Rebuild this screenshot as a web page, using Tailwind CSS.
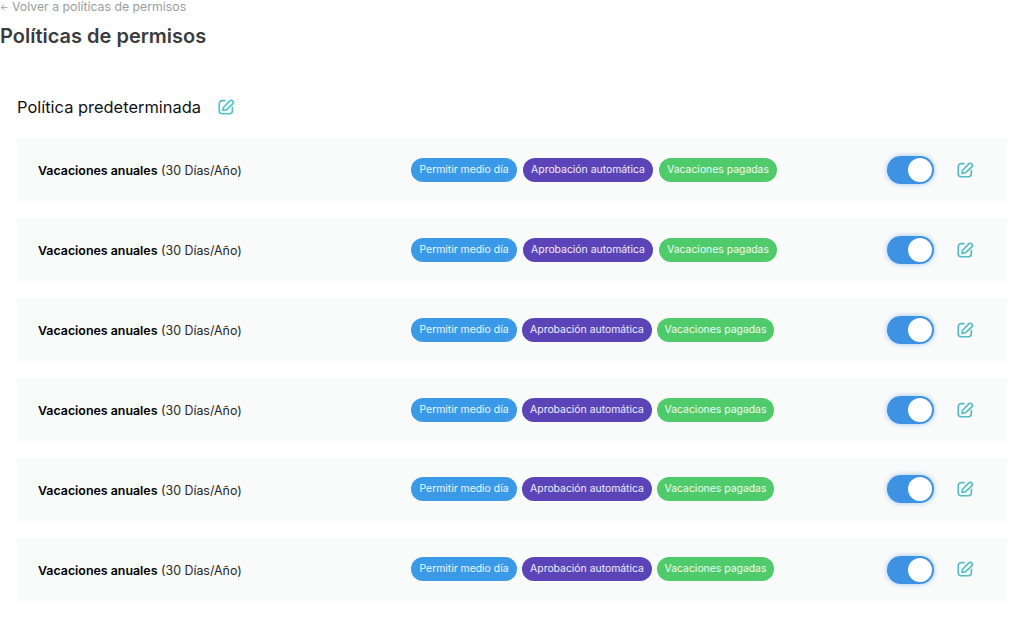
<!DOCTYPE html>
<html lang="es">
<head>
    <meta charset="UTF-8">
    <title>Políticas de permisos</title>
    <script src="https://cdn.jsdelivr.net/npm/@tailwindcss/browser@4"></script>
</head>
<body class="bg-white w-[1024px] h-[618px] overflow-hidden font-['Inter',sans-serif]">
    <!-- Header -->
    <a class="flex items-center gap-[3px] text-[12.300px] leading-[14px] text-[#9a9ea3]"><span class="w-[9px] text-[9px]">←</span>Volver a políticas de permisos</a>
    <h1 class="mt-[7px] text-[20px] leading-[30px] font-semibold text-[#3a3b3d]">Políticas de permisos</h1>

    <div class="pl-[17px] pr-[17px] mt-[44px]">
        <div class="flex items-center h-[24px] mb-[19px]">
            <h2 class="text-[16.450px] leading-[24px] text-[#111214]">Política predeterminada</h2>
            <svg class="ml-[16px] w-[18px] h-[18px] text-[#4cc4d0]" viewBox="0 0 24 24" fill="none" stroke="currentColor" stroke-width="2.200" stroke-linecap="round" stroke-linejoin="round"><path d="M10.500 3.500H7a4 4 0 0 0-4 4V17a4 4 0 0 0 4 4h9.500a4 4 0 0 0 4-4v-4.500"/><path d="M8 16.500l.8-4.200L17.500 3.600a2 2 0 0 1 2.900 0l.9.900a2 2 0 0 1 0 2.900L12.500 15.700z"/></svg>
        </div>

        <div class="flex flex-col gap-[17px]">
            <!-- Row 1 -->
            <div class="flex items-center h-[63px] bg-[#f9fafa] pl-[21px]">
                <p class="w-[373px] pt-[3px] text-[12.400px] text-[#26272a]"><b class="font-semibold text-black">Vacaciones anuales</b> (30 Días/Año)</p>
                <div class="flex gap-[6px] text-[10.400px] text-white/90">
                    <span class="flex items-center justify-center h-[24px] w-[106px] rounded-full bg-[#3b9ae8]">Permitir medio día</span>
                    <span class="flex items-center justify-center h-[24px] w-[130px] rounded-full bg-[#5b43b8]">Aprobación automática</span>
                    <span class="flex items-center justify-center h-[24px] w-[118px] rounded-full bg-[#50cb6b]">Vacaciones pagadas</span>
                </div>
                <div class="ml-[110px] flex items-center justify-end w-[47px] h-[28px] p-[2px] rounded-full bg-[#3d92e4] shadow-[0_0_5px_rgba(61,146,228,0.5)]">
                    <span class="w-[24px] h-[24px] rounded-full bg-white"></span>
                </div>
                <svg class="ml-[22px] w-[18px] h-[18px] text-[#55bcc6]" viewBox="0 0 24 24" fill="none" stroke="currentColor" stroke-width="2.200" stroke-linecap="round" stroke-linejoin="round"><path d="M10.500 3.500H7a4 4 0 0 0-4 4V17a4 4 0 0 0 4 4h9.500a4 4 0 0 0 4-4v-4.500"/><path d="M8 16.500l.8-4.200L17.500 3.600a2 2 0 0 1 2.900 0l.9.900a2 2 0 0 1 0 2.900L12.500 15.700z"/></svg>
            </div>
            <!-- Row 2 -->
            <div class="flex items-center h-[63px] bg-[#f9fafa] pl-[21px]">
                <p class="w-[373px] pt-[3px] text-[12.400px] text-[#26272a]"><b class="font-semibold text-black">Vacaciones anuales</b> (30 Días/Año)</p>
                <div class="flex gap-[6px] text-[10.400px] text-white/90">
                    <span class="flex items-center justify-center h-[24px] w-[106px] rounded-full bg-[#3b9ae8]">Permitir medio día</span>
                    <span class="flex items-center justify-center h-[24px] w-[130px] rounded-full bg-[#5b43b8]">Aprobación automática</span>
                    <span class="flex items-center justify-center h-[24px] w-[118px] rounded-full bg-[#50cb6b]">Vacaciones pagadas</span>
                </div>
                <div class="ml-[110px] flex items-center justify-end w-[47px] h-[28px] p-[2px] rounded-full bg-[#3d92e4] shadow-[0_0_5px_rgba(61,146,228,0.5)]">
                    <span class="w-[24px] h-[24px] rounded-full bg-white"></span>
                </div>
                <svg class="ml-[22px] w-[18px] h-[18px] text-[#55bcc6]" viewBox="0 0 24 24" fill="none" stroke="currentColor" stroke-width="2.200" stroke-linecap="round" stroke-linejoin="round"><path d="M10.500 3.500H7a4 4 0 0 0-4 4V17a4 4 0 0 0 4 4h9.500a4 4 0 0 0 4-4v-4.500"/><path d="M8 16.500l.8-4.200L17.500 3.600a2 2 0 0 1 2.900 0l.9.900a2 2 0 0 1 0 2.900L12.500 15.700z"/></svg>
            </div>
            <!-- Row 3 -->
            <div class="flex items-center h-[63px] bg-[#f9fafa] pl-[21px]">
                <p class="w-[373px] pt-[3px] text-[12.400px] text-[#26272a]"><b class="font-semibold text-black">Vacaciones anuales</b> (30 Días/Año)</p>
                <div class="flex gap-[5px] w-[363px] text-[10.400px] text-white/90">
                    <span class="flex items-center justify-center h-[24px] w-[106px] rounded-full bg-[#3b9ae8]">Permitir medio día</span>
                    <span class="flex items-center justify-center h-[24px] w-[130px] rounded-full bg-[#5b43b8]">Aprobación automática</span>
                    <span class="flex items-center justify-center h-[24px] w-[117px] rounded-full bg-[#50cb6b]">Vacaciones pagadas</span>
                </div>
                <div class="ml-[113px] flex items-center justify-end w-[47px] h-[28px] p-[2px] rounded-full bg-[#3d92e4] shadow-[0_0_5px_rgba(61,146,228,0.5)]">
                    <span class="w-[24px] h-[24px] rounded-full bg-white"></span>
                </div>
                <svg class="ml-[22px] w-[18px] h-[18px] text-[#55bcc6]" viewBox="0 0 24 24" fill="none" stroke="currentColor" stroke-width="2.200" stroke-linecap="round" stroke-linejoin="round"><path d="M10.500 3.500H7a4 4 0 0 0-4 4V17a4 4 0 0 0 4 4h9.500a4 4 0 0 0 4-4v-4.500"/><path d="M8 16.500l.8-4.200L17.500 3.600a2 2 0 0 1 2.900 0l.9.900a2 2 0 0 1 0 2.900L12.500 15.700z"/></svg>
            </div>
            <!-- Row 4 -->
            <div class="flex items-center h-[63px] bg-[#f9fafa] pl-[21px]">
                <p class="w-[373px] pt-[3px] text-[12.400px] text-[#26272a]"><b class="font-semibold text-black">Vacaciones anuales</b> (30 Días/Año)</p>
                <div class="flex gap-[5px] w-[363px] text-[10.400px] text-white/90">
                    <span class="flex items-center justify-center h-[24px] w-[106px] rounded-full bg-[#3b9ae8]">Permitir medio día</span>
                    <span class="flex items-center justify-center h-[24px] w-[130px] rounded-full bg-[#5b43b8]">Aprobación automática</span>
                    <span class="flex items-center justify-center h-[24px] w-[117px] rounded-full bg-[#50cb6b]">Vacaciones pagadas</span>
                </div>
                <div class="ml-[113px] flex items-center justify-end w-[47px] h-[28px] p-[2px] rounded-full bg-[#3d92e4] shadow-[0_0_5px_rgba(61,146,228,0.5)]">
                    <span class="w-[24px] h-[24px] rounded-full bg-white"></span>
                </div>
                <svg class="ml-[22px] w-[18px] h-[18px] text-[#55bcc6]" viewBox="0 0 24 24" fill="none" stroke="currentColor" stroke-width="2.200" stroke-linecap="round" stroke-linejoin="round"><path d="M10.500 3.500H7a4 4 0 0 0-4 4V17a4 4 0 0 0 4 4h9.500a4 4 0 0 0 4-4v-4.500"/><path d="M8 16.500l.8-4.200L17.500 3.600a2 2 0 0 1 2.900 0l.9.900a2 2 0 0 1 0 2.900L12.500 15.700z"/></svg>
            </div>
            <!-- Row 5 -->
            <div class="flex items-center h-[63px] bg-[#f9fafa] pl-[21px]">
                <p class="w-[373px] pt-[3px] text-[12.400px] text-[#26272a]"><b class="font-semibold text-black">Vacaciones anuales</b> (30 Días/Año)</p>
                <div class="flex gap-[5px] w-[363px] -mt-[2px] text-[10.400px] text-white/90">
                    <span class="flex items-center justify-center h-[24px] w-[106px] rounded-full bg-[#3b9ae8]">Permitir medio día</span>
                    <span class="flex items-center justify-center h-[24px] w-[130px] rounded-full bg-[#5b43b8]">Aprobación automática</span>
                    <span class="flex items-center justify-center h-[24px] w-[117px] rounded-full bg-[#50cb6b]">Vacaciones pagadas</span>
                </div>
                <div class="ml-[113px] -mt-[2px] flex items-center justify-end w-[47px] h-[28px] p-[2px] rounded-full bg-[#3d92e4] shadow-[0_0_5px_rgba(61,146,228,0.5)]">
                    <span class="w-[24px] h-[24px] rounded-full bg-white"></span>
                </div>
                <svg class="ml-[22px] -mt-[2px] w-[18px] h-[18px] text-[#55bcc6]" viewBox="0 0 24 24" fill="none" stroke="currentColor" stroke-width="2.200" stroke-linecap="round" stroke-linejoin="round"><path d="M10.500 3.500H7a4 4 0 0 0-4 4V17a4 4 0 0 0 4 4h9.500a4 4 0 0 0 4-4v-4.500"/><path d="M8 16.500l.8-4.200L17.500 3.600a2 2 0 0 1 2.900 0l.9.900a2 2 0 0 1 0 2.900L12.500 15.700z"/></svg>
            </div>
            <!-- Row 6 -->
            <div class="flex items-center h-[63px] bg-[#f9fafa] pl-[21px]">
                <p class="w-[373px] pt-[3px] text-[12.400px] text-[#26272a]"><b class="font-semibold text-black">Vacaciones anuales</b> (30 Días/Año)</p>
                <div class="flex gap-[5px] w-[363px] -mt-[2px] text-[10.400px] text-white/90">
                    <span class="flex items-center justify-center h-[24px] w-[106px] rounded-full bg-[#3b9ae8]">Permitir medio día</span>
                    <span class="flex items-center justify-center h-[24px] w-[130px] rounded-full bg-[#5b43b8]">Aprobación automática</span>
                    <span class="flex items-center justify-center h-[24px] w-[117px] rounded-full bg-[#50cb6b]">Vacaciones pagadas</span>
                </div>
                <div class="ml-[113px] flex items-center justify-end w-[47px] h-[28px] p-[2px] rounded-full bg-[#3d92e4] shadow-[0_0_5px_rgba(61,146,228,0.5)]">
                    <span class="w-[24px] h-[24px] rounded-full bg-white"></span>
                </div>
                <svg class="ml-[22px] -mt-[2px] w-[18px] h-[18px] text-[#55bcc6]" viewBox="0 0 24 24" fill="none" stroke="currentColor" stroke-width="2.200" stroke-linecap="round" stroke-linejoin="round"><path d="M10.500 3.500H7a4 4 0 0 0-4 4V17a4 4 0 0 0 4 4h9.500a4 4 0 0 0 4-4v-4.500"/><path d="M8 16.500l.8-4.200L17.500 3.600a2 2 0 0 1 2.900 0l.9.900a2 2 0 0 1 0 2.900L12.500 15.700z"/></svg>
            </div>
        </div>
    </div>
</body>
</html>
